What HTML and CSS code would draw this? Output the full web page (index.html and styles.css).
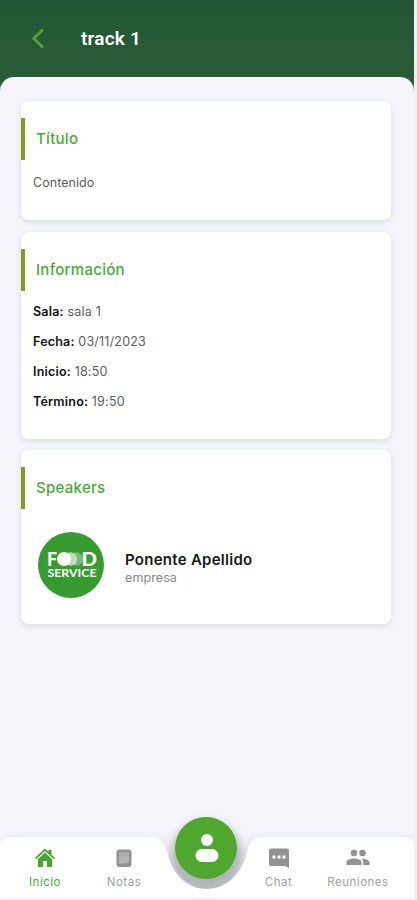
FILE: index.html
```html
<!DOCTYPE html>
<html lang="es">
<head>
<meta charset="utf-8">
<title>track 1</title>
<link rel="stylesheet" href="styles.css">
</head>
<body>
<div class="screen">
  <header class="header">
    <svg class="back" width="14" height="22" viewBox="0 0 14 22"><path d="M12 1.500 2.800 10.500l9.200 9" fill="none" stroke="#4da32f" stroke-width="3"/></svg>
    <h1 class="title">track 1</h1>
  </header>
  <main class="content">
    <section class="card card-title">
      <h2 class="heading">Título</h2>
      <p class="row">Contenido</p>
    </section>
    <section class="card card-info">
      <h2 class="heading">Información</h2>
      <p class="row"><b>Sala:</b> sala 1</p>
      <p class="row"><b>Fecha:</b> 03/11/2023</p>
      <p class="row"><b>Inicio:</b> 18:50</p>
      <p class="row"><b>Término:</b> 19:50</p>
    </section>
    <section class="card card-speakers">
      <h2 class="heading">Speakers</h2>
      <div class="speaker">
        <svg class="logo" width="68" height="68" viewBox="0 0 68 68">
          <circle cx="34" cy="34" r="33" fill="#379b32"/>
          <g fill="#fff" font-family="Lato, sans-serif" font-weight="900">
            <text x="10" y="34.500" font-size="18" textLength="10" lengthAdjust="spacingAndGlyphs">F</text>
            <circle cx="39.500" cy="28" r="6.700" fill="#79bb74"/>
            <circle cx="33.500" cy="28" r="6.700" fill="#bcdcba"/>
            <circle cx="27" cy="28" r="7"/>
            <text x="44.500" y="34.500" font-size="18" textLength="15.500" lengthAdjust="spacingAndGlyphs">D</text>
            <text x="10.500" y="45.500" font-size="12" font-weight="700" textLength="49" lengthAdjust="spacingAndGlyphs">SERVICE</text>
          </g>
        </svg>
        <div class="speaker-text">
          <div class="name">Ponente Apellido</div>
          <div class="company">empresa</div>
        </div>
      </div>
    </section>
  </main>
  <nav class="nav">
    <svg class="nav-shape" width="414" height="96" viewBox="0 0 414 96">
      <defs><filter id="soft" x="-10%" y="-30%" width="120%" height="160%"><feGaussianBlur stdDeviation="4"/></filter>
      <filter id="dish" x="-40%" y="-40%" width="180%" height="180%"><feGaussianBlur stdDeviation="5"/></filter></defs>
      <path d="M0 38Q7 33 14 33H152C163 33 166 40 169 50C173 69 187 86 206.500 86C225 86 239 68 244 50C247 38 250 33 260 33H402Q408 33 414 38V96H0z" fill="#b9bdc5" opacity=".3" filter="url(#soft)"/>
      <circle cx="206.500" cy="53" r="36" fill="#73757b" opacity=".5" filter="url(#dish)"/>
      <path d="M0 38Q5 33 14 33H149C160 33 164 38 167 48C172 70 187 85 206.500 85C226 85 241 70 246 52C249 38 253 33 263 33H402Q409 33 414 38V94.500H0z" fill="#fff"/>
      <path d="M0 94.500H414V96H0z" fill="#f1f2f3"/>
    </svg>
    <a class="tab active"><svg width="20" height="20" viewBox="0 0 20 20"><path d="M0 10 10 .5 13.500 3.800V2h3v4.700L20 10l-1 1.200L10 3 1 11.200z" fill="#43a52d"/><path d="M3 11 10 4.700 17 11v8h-5v-6H8v6H3z" fill="#43a52d"/></svg><span>Inicio</span></a>
    <a class="tab"><svg width="20" height="20" viewBox="0 0 20 20"><rect x="2.500" y="1.500" width="15" height="17.500" rx="3" fill="#939393"/><path d="M5 4.500h10v8.500L12.500 15.500H5z" fill="#b4b4b4"/><path d="M5 7h10" stroke="#a4a4a4"/></svg><span>Notas</span></a>
    <a class="profile"><svg width="62" height="62" viewBox="0 0 62 62"><circle cx="31" cy="31" r="31" fill="#4fa72e"/><circle cx="32" cy="23" r="6" fill="#fff"/><rect x="20.500" y="32" width="23" height="13" rx="6.500" fill="#fff"/></svg></a>
    <a class="tab"><svg width="20" height="20" viewBox="0 0 20 20"><path d="M2 .5h16q2 0 2 2V20l-4-2H2q-2 0-2-2V2.500q0-2 2-2z" fill="#929292"/><path d="M3.500 7.500h3v3h-3zM8.500 7.500h3v3h-3zM13.500 7.500h3v3h-3z" fill="#fff"/></svg><span>Chat</span></a>
    <a class="tab"><svg width="24" height="20" viewBox="0 0 24 20"><g fill="#929292"><circle cx="8" cy="5" r="3.300"/><circle cx="16.500" cy="5" r="3.300"/><path d="M.5 17v-2.500c0-3 4-4 7.500-4s7.500 1 7.500 4V17zM16 10.700c3.500.2 7.500 1.200 7.500 3.800V17h-6.300v-2.500c0-1.700-.8-2.900-2-3.700z"/></g></svg><span>Reuniones</span></a>
  </nav>
</div>
</body>
</html>
```
FILE: styles.css
```css
* { box-sizing: border-box; }
body { margin: 0; background: #f0f1f2; font-family: Inter, sans-serif; overflow: hidden; }
.screen { width: 414px; height: 900px; display: flex; flex-direction: column; background: linear-gradient(#235735, #2a5c35 90px); position: relative; overflow: hidden; }
.header { height: 77px; display: flex; align-items: center; padding: 1px 0 0 31px; flex: none; }
.back { margin-right: 36px; }
.title { margin: 0; color: #fff; font: 600 19px/24px Roboto, sans-serif; letter-spacing: .2px; }
.content { flex: 1; background: #f4f6fb; border-radius: 14px 14px 0 0; padding: 23.500px 23px 0 21px; display: flex; flex-direction: column; gap: 12px; }
.card { background: #fff; border-radius: 8px; box-shadow: 0 2px 6px rgba(60,65,75,.14); padding-top: 17px; flex: none; }
.card-title { height: 119px; }
.card-info { height: 207px; }
.card-speakers { height: 174px; margin-top: -1px; }
.heading { margin: 0 0 8px; height: 42px; line-height: 42px; border-left: 4px solid #829b22; padding-left: 11px; font-size: 15px; font-weight: 500; letter-spacing: .28px; color: #4aa83a; }
.card-info .heading { line-height: 41px; margin-bottom: 6px; }
.row { margin: 0; padding-left: 12px; height: 30px; line-height: 30px; font-size: 12.500px; letter-spacing: .05px; color: #5c5c5c; }
.card-info .row { letter-spacing: .2px; }
.row b { color: #111; font-weight: 600; }
.speaker { display: flex; align-items: center; padding: 14.500px 0 0 16px; gap: 20px; }
.logo { display: block; }
.speaker-text { padding-top: 5px; }
.name { font-size: 15px; line-height: 19px; font-weight: 600; letter-spacing: .27px; color: #181818; }
.company { font-size: 12.500px; line-height: 17px; letter-spacing: .1px; color: #888; }
.nav { height: 96px; margin-top: -96px; position: relative; display: grid; grid-template-columns: 90px 68px 97px 47px 112px; align-items: end; flex: none; }
.nav-shape { position: absolute; inset: 0; }
.tab { position: relative; display: flex; flex-direction: column; align-items: center; gap: 6px; height: 52px; color: #a0a0a0; font-size: 11.500px; line-height: 16px; letter-spacing: .5px; }
.active { color: #4aa83a; }
.profile { position: relative; align-self: start; padding: 13px 0 0 17px; line-height: 0; }
```
